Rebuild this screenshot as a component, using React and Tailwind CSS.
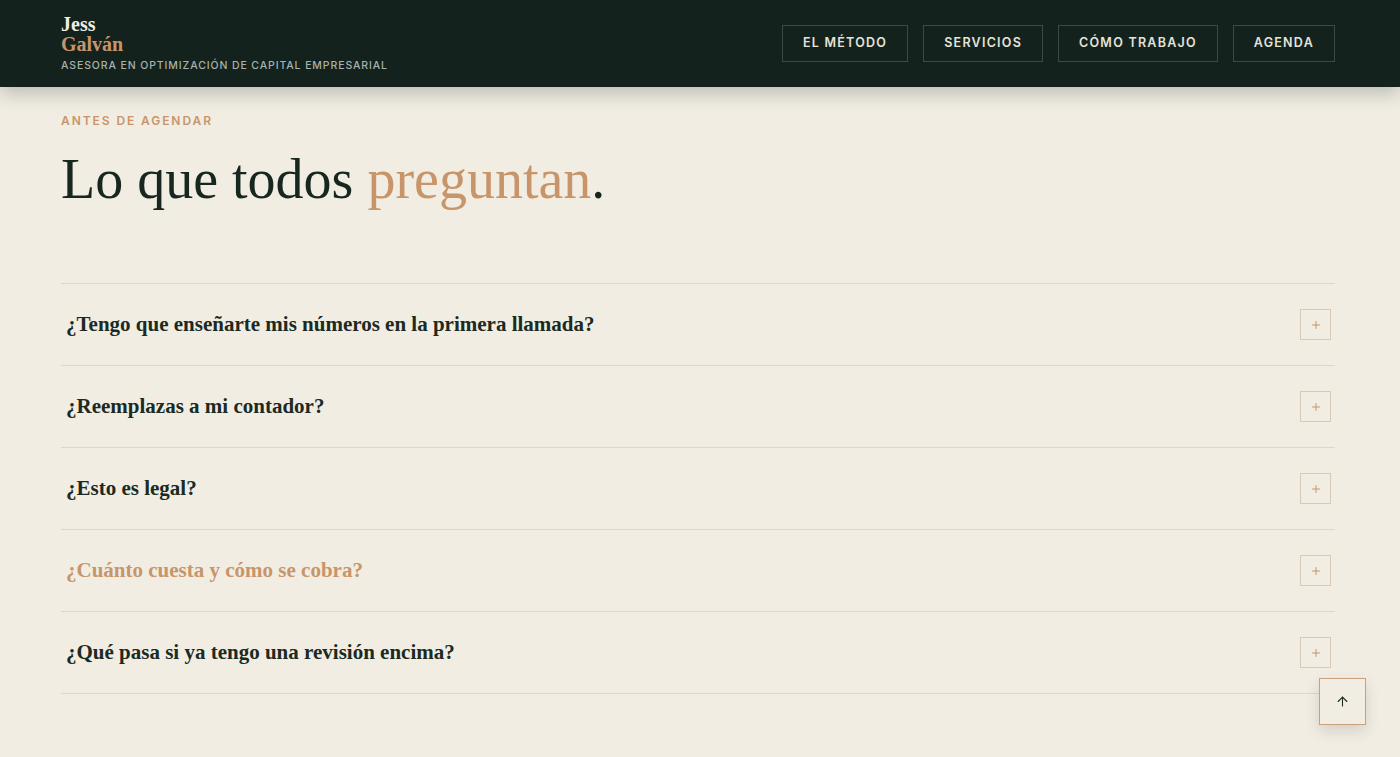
import { ArrowUp, Plus } from 'lucide-react';

const navItems = ['EL MÉTODO', 'SERVICIOS', 'CÓMO TRABAJO', 'AGENDA'];

const faqs = [
  { q: '¿Tengo que enseñarte mis números en la primera llamada?' },
  { q: '¿Reemplazas a mi contador?' },
  { q: '¿Esto es legal?' },
  { q: '¿Cuánto cuesta y cómo se cobra?', active: true },
  { q: '¿Qué pasa si ya tengo una revisión encima?' },
];

const serif = { fontFamily: '"Liberation Serif", "DejaVu Serif", serif' };

const App = () => {
  return (
    <div className="relative min-h-[757px] bg-[#f1ede3] font-['Inter',sans-serif]">
      <header className="relative z-10 flex h-[87px] items-center justify-between bg-[#13221c] pl-[61px] pr-[65px] shadow-[0_6px_18px_rgba(19,34,28,0.25)]">
        <div className="pt-[1px]">
          <p className="font-['Liberation_Serif',serif] text-[20px] font-bold leading-[20px] text-[#f1ede3]">Jess</p>
          <p className="font-['Liberation_Serif',serif] text-[20px] font-bold leading-[20px] text-[#c8956a]">Galván</p>
          <p className="mt-[4px] text-[10.5px] font-medium tracking-[0.085em] text-[#a9b2ac]">
            ASESORA EN OPTIMIZACIÓN DE CAPITAL EMPRESARIAL
          </p>
        </div>
        <nav className="flex items-center gap-[15px]">
          {navItems.map((item) => (
            <a
              key={item}
              className="flex h-[37px] items-center border border-[#3c4a43] px-[20px] text-[12.5px] font-semibold tracking-[0.1em] text-[#e6e3db]"
            >
              {item}
            </a>
          ))}
        </nav>
      </header>

      <main className="pl-[61px] pr-[65px] pt-[25px]">
        <p className="text-[12px] font-semibold tracking-[0.16em] text-[#c8956a]">ANTES DE AGENDAR</p>
        <h2 className="mt-[15px] text-[56px] leading-[68px] text-[#17271f]" style={serif}>
          Lo que todos <span className="text-[#c8956a]">preguntan</span>.
        </h2>

        <ul className="mt-[70px] border-t border-[#ddd6c9]">
          {faqs.map((item) => (
            <li key={item.q} className="flex h-[82px] items-center justify-between border-b border-[#ddd6c9] pl-[5px] pr-[4px]">
              <span
                className={`text-[21px] font-bold ${item.active ? 'text-[#c8956a]' : 'text-[#1b2a22]'}`}
                style={serif}
              >
                {item.q}
              </span>
              <span className="flex h-[31px] w-[31px] items-center justify-center border border-[#d9c9b5] text-[#c8956a]">
                <Plus size={12} strokeWidth={2} />
              </span>
            </li>
          ))}
        </ul>
      </main>

      <button className="absolute left-[1319px] top-[678px] flex h-[47px] w-[47px] items-center justify-center border border-[#c8a07e] bg-[#f1ede3] text-[#1b2a22] shadow-[0_6px_14px_rgba(0,0,0,0.12)]">
        <ArrowUp size={15} strokeWidth={1.75} />
      </button>
    </div>
  );
};

export default App;
